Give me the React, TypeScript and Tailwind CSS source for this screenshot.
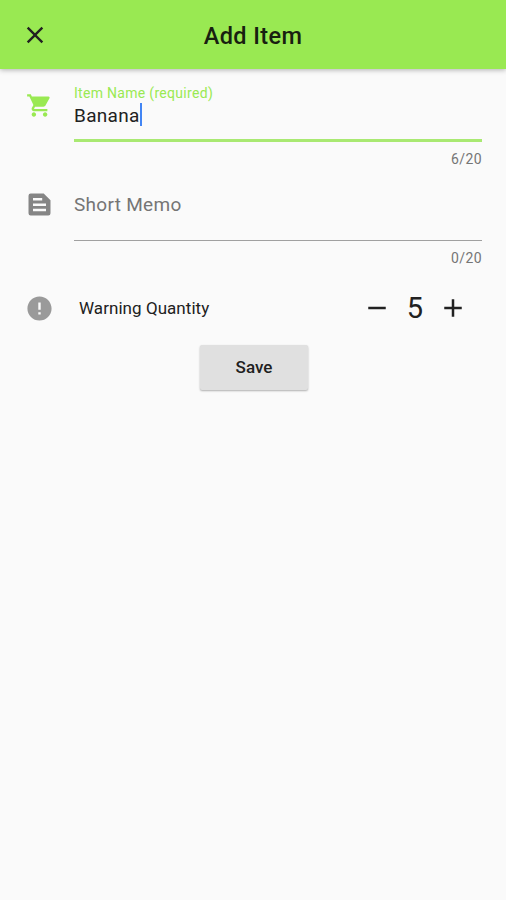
import { MdClose, MdShoppingCart, MdError, MdRemove, MdAdd } from "react-icons/md"

function MemoIcon() {
  return (
    <svg viewBox="0 0 27 27" className="mr-[21px] size-[27px] text-[#858585]" fill="none">
      <path
        d="M4.7 2.5h13l6.8 6.8v13a2.2 2.2 0 0 1-2.2 2.2H4.7a2.2 2.2 0 0 1-2.2-2.2V4.7a2.2 2.2 0 0 1 2.2-2.2z"
        fill="currentColor"
      />
      <path d="M7 8.3h9.2M7 13.7h13M7 19h13" stroke="#fafafa" strokeWidth="2.4" />
    </svg>
  )
}

export default function App() {
  return (
    <div className="flex h-[900px] w-[506px] flex-col bg-[#fafafa] font-[Roboto,sans-serif] text-[#212121]">
      <header className="z-10 grid h-[69px] grid-cols-[69px_1fr_69px] items-center bg-[#99e952] shadow-[0_1px_5px_rgba(0,0,0,0.3)]">
        <button className="flex justify-center" aria-label="Close">
          <MdClose className="size-[28px]" />
        </button>
        <h1 className="pt-[5px] text-center text-[23.5px] font-medium tracking-[0.4px] text-[#182010]">Add Item</h1>
      </header>

      <main className="flex flex-col pr-6 pl-[26px]">
        <div className="flex pt-[14px]">
          <MdShoppingCart className="mt-[9px] mr-[21px] size-[27px] text-[#99e952]" />
          <div className="flex-1">
            <label className="block pt-px text-[14px] leading-[18px] tracking-[0.3px] text-[#99e952]">
              Item Name (required)
            </label>
            <div className="flex h-[40px] items-start border-b-[3px] border-[#a9e972]">
              <span className="text-[19px] leading-[27px] tracking-[0.3px]">Banana</span>
              <span className="mt-px h-[23px] w-[2px] bg-[#4285f4]" />
            </div>
            <p className="pt-2 text-right text-[14px] leading-[18px] tracking-[0.4px] text-[#757575]">6/20</p>
          </div>
        </div>

        <div className="flex pt-[23px]">
          <MemoIcon />
          <div className="flex-1">
            <div className="h-[50px] border-b-[1.5px] border-[#a0a0a0] text-[19px] leading-[27px] tracking-[0.3px] text-[#757575]">
              Short Memo
            </div>
            <p className="pt-2 text-right text-[14px] leading-[18px] tracking-[0.4px] text-[#757575]">0/20</p>
          </div>
        </div>

        <div className="flex items-center pt-[26px]">
          <MdError className="-ml-px size-[29px] text-[#9a9a9a]" />
          <span className="ml-[25px] flex-1 pt-[2px] text-[17px] tracking-[0.05px]">Warning Quantity</span>
          <div className="mr-[14px] flex items-center">
            <MdRemove className="size-[30px]" />
            <span className="w-[46px] text-center text-[29px] leading-7">5</span>
            <MdAdd className="size-[30px]" />
          </div>
        </div>

        <button className="mt-[22px] h-[45px] w-[108px] self-center rounded-[2px] bg-[#e0e0e0] pt-px text-[17px] font-medium shadow-[0_1px_2px_rgba(0,0,0,0.3)]">
          Save
        </button>
      </main>
    </div>
  )
}
